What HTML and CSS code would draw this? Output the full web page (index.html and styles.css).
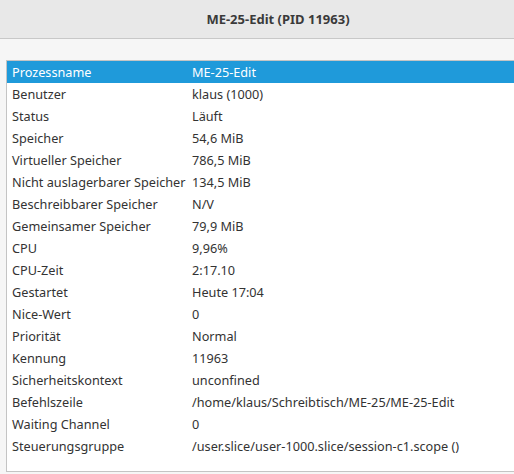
FILE: index.html
```html
<!DOCTYPE html>
<html lang="de">
<head>
    <meta charset="UTF-8">
    <title>ME-25-Edit (PID 11963)</title>
    <link rel="stylesheet" href="styles.css">
</head>
<body>
    <header class="titlebar">
        <h1>ME-25-Edit (PID 11963)</h1>
    </header>
    <main class="content">
        <div class="frame">
            <ul class="props">
                <li class="selected"><span>Prozessname</span><span>ME-25-Edit</span></li>
                <li><span>Benutzer</span><span>klaus (1000)</span></li>
                <li><span>Status</span><span>Läuft</span></li>
                <li><span>Speicher</span><span>54,6 MiB</span></li>
                <li><span>Virtueller Speicher</span><span>786,5 MiB</span></li>
                <li><span>Nicht auslagerbarer Speicher</span><span>134,5 MiB</span></li>
                <li><span>Beschreibbarer Speicher</span><span>N/V</span></li>
                <li><span>Gemeinsamer Speicher</span><span>79,9 MiB</span></li>
                <li><span>CPU</span><span>9,96%</span></li>
                <li><span>CPU-Zeit</span><span>2:17.10</span></li>
                <li><span>Gestartet</span><span>Heute 17:04</span></li>
                <li><span>Nice-Wert</span><span>0</span></li>
                <li><span>Priorität</span><span>Normal</span></li>
                <li><span>Kennung</span><span>11963</span></li>
                <li><span>Sicherheitskontext</span><span>unconfined</span></li>
                <li><span>Befehlszeile</span><span>/home/klaus/Schreibtisch/ME-25/ME-25-Edit</span></li>
                <li><span>Waiting Channel</span><span>0</span></li>
                <li><span>Steuerungsgruppe</span><span>/user.slice/user-1000.slice/session-c1.scope ()</span></li>
            </ul>
        </div>
    </main>
</body>
</html>
```

FILE: styles.css
```css
body {
    margin: 0;
    font-family: 'Noto Sans', sans-serif;
    font-size: 13px;
    color: #3c3c3c;
    background: #f6f6f6;
    overflow: hidden;
}

.titlebar {
    height: 38px;
    background: #e8e8e8;
    border-bottom: 1px solid #c8c8c8;
    display: flex;
    justify-content: center;
    align-items: center;
    padding-left: 42px;
}

.titlebar h1 {
    margin: 0;
    font-size: 13px;
    font-weight: bold;
    color: #3a3a3a;
}

.content {
    padding: 21px 0 0 6px;
}

/* the list frame runs on past the right edge, so no right border */
.frame {
    height: 410px;
    background: #fff;
    border: 1px solid #c4c4c4;
    border-right: none;
}

.props {
    list-style: none;
    margin: 0;
    padding: 0;
    font-size: 12.7px;
}

.props li {
    display: grid;
    grid-template-columns: 180px auto;
    height: 22px;
    align-items: center;
    padding-left: 5px;
    color: #333;
    white-space: nowrap;
}

.props li.selected {
    background: #1f9ada;
    color: #fff;
}
```
